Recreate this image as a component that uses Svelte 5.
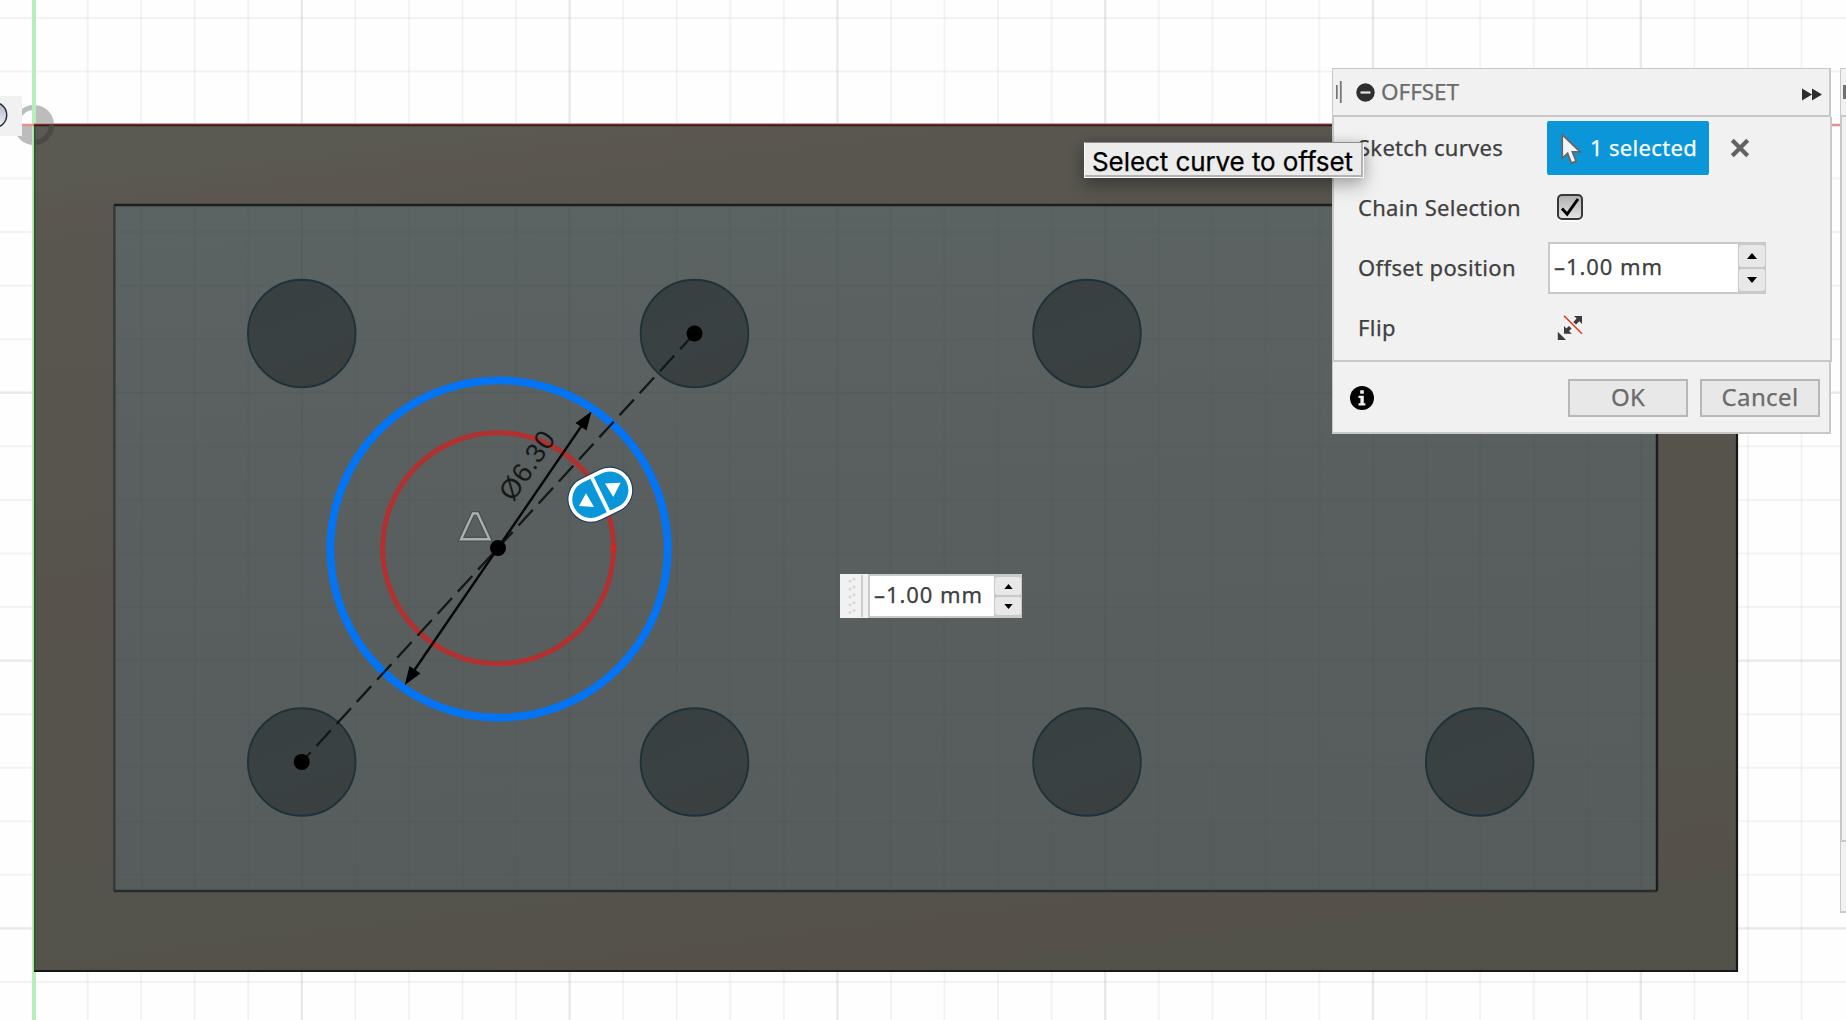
<script>
  const step = 53.56;
  const ox = 34;
  const oy = 125;
  const columns = Array.from({ length: 34 }, (_, i) => ({ at: ox + i * step, major: i % 5 === 0 }));
  const rows = Array.from({ length: 19 }, (_, i) => ({ at: oy + (i - 2) * step, major: (i - 2) % 5 === 0 }));
  const holes = [
    [301.7, 333.5], [694.5, 333.5], [1087, 333.5],
    [301.7, 762], [694.5, 762], [1087, 762], [1479.7, 762]
  ];

  let offset = $state('–1.00 mm');

  // Tracks a label's letters so that it takes up the given width.
  function fit(node, width) {
    const natural = node.getBoundingClientRect().width;
    const gaps = node.textContent.length;
    node.style.letterSpacing = `${(width - natural) / gaps}px`;
  }
</script>

<main class="viewport">
  <svg class="scene" width="1846" height="1020" viewBox="0 0 1846 1020">
    <defs>
      <linearGradient id="frame" gradientUnits="userSpaceOnUse" x1="0" y1="0" x2="131" y2="1092">
        <stop offset="0" stop-color="#5a5952" />
        <stop offset=".17" stop-color="#5a5952" />
        <stop offset=".2" stop-color="#5b5750" />
        <stop offset=".24" stop-color="#58564f" />
        <stop offset=".45" stop-color="#57554e" />
        <stop offset=".55" stop-color="#57534c" />
        <stop offset=".7" stop-color="#55534c" />
        <stop offset=".87" stop-color="#54534c" />
        <stop offset=".89" stop-color="#55514b" />
        <stop offset=".97" stop-color="#55514a" />
        <stop offset=".98" stop-color="#52514a" />
        <stop offset="1" stop-color="#52514a" />
      </linearGradient>
      <linearGradient id="pocket" x1="0" y1="0" x2=".1" y2="1">
        <stop offset="0" stop-color="#5c6363" />
        <stop offset=".5" stop-color="#595f5e" />
        <stop offset="1" stop-color="#575d5c" />
      </linearGradient>
      <linearGradient id="hole" x1="0" y1="0" x2=".4" y2="1">
        <stop offset="0" stop-color="#383f41" />
        <stop offset=".6" stop-color="#3a4143" />
        <stop offset="1" stop-color="#3a4040" />
      </linearGradient>
      <linearGradient id="ball" x1="0" y1="0" x2="0" y2="1">
        <stop offset="0" stop-color="#aeb4c4" />
        <stop offset="1" stop-color="#f4f5f8" />
      </linearGradient>
      <clipPath id="pocketArea"><rect x="115" y="206" width="1541" height="684" /></clipPath>
    </defs>

    <rect width="1846" height="1020" fill="#fefefe" />
    {#each columns as line}
      <line x1={line.at} x2={line.at} y1="0" y2="1020" class="grid" class:major={line.major} />
    {/each}
    {#each rows as line}
      <line x1="0" x2="1846" y1={line.at} y2={line.at} class="grid" class:major={line.major} />
    {/each}

    <!-- Axes and origin marker -->
    <path d="M34 125V105A20 20 0 0 1 54 125ZM34 125V145A20 20 0 0 1 14 125Z" fill="#bcbcbc" />
    <path d="M16.5 125A17.5 17.5 0 0 1 34 107.5" fill="none" stroke="#bcbcbc" stroke-width="5" />
    <line x1="34" x2="34" y1="0" y2="1020" stroke="#b6f0b6" stroke-width="4" />
    <line x1="0" x2="1846" y1="125" y2="125" stroke="#e88f8f" stroke-width="2.6" />

    <!-- Solid body -->
    <rect x="34.5" y="125" width="1702.5" height="846" fill="url(#frame)" />
    <path d="M34.7 125V971" stroke="#35522f" stroke-width="1.6" />
    <path d="M34 971H1737V125" fill="none" stroke="#171715" stroke-width="2.2" />
    <path d="M34 123.8H1737" stroke="#b98b8b" stroke-width="1" />
    <path d="M34 125.2H1737" stroke="#431518" stroke-width="2" />
    <path d="M51.5 125A17.5 17.5 0 0 1 34 142.5" fill="none" stroke="#4a4944" stroke-width="5" />

    <rect x="114.5" y="205" width="1542.5" height="686" fill="url(#pocket)" />
    <g clip-path="url(#pocketArea)">
      {#each columns as line}
        <line x1={line.at} x2={line.at} y1="205" y2="891" class="inner" class:strong={line.major} />
      {/each}
      {#each rows as line}
        <line x1="114" x2="1657" y1={line.at} y2={line.at} class="inner" class:strong={line.major} />
      {/each}
    </g>
    <path d="M114.3 205V891" stroke="#383b3a" stroke-width="2.6" />
    <path d="M114 891H1657" stroke="#272c2c" stroke-width="2.4" />
    <path d="M114 205H1657V891" fill="none" stroke="#1b1d1e" stroke-width="2.4" />

    {#each holes as [x, y]}
      <circle cx={x} cy={y} r="53.8" fill="url(#hole)" stroke="#1f323a" stroke-width="1.9" />
    {/each}

    <!-- Sketch -->
    <circle cx="498.1" cy="548.2" r="115.5" fill="none" stroke="#b13030" stroke-width="5" />
    <circle cx="613.5" cy="548.2" r="3" fill="#e0201f" />
    <circle cx="499" cy="549" r="168.7" fill="none" stroke="#0374f4" stroke-width="7.8" />
    <line x1="694.5" y1="333.5" x2="301.7" y2="762" stroke="#151717" stroke-width="2.3" stroke-dasharray="21.3 8.6" />
    <line x1="589" y1="415" x2="407" y2="681" stroke="#060707" stroke-width="2.4" />
    <path d="M591.5 411.5L586.5 430.5L575.5 423ZM404.8 685L409.5 666L420.5 673.5Z" fill="#000" />
    <circle cx="498" cy="548" r="8" />
    <circle cx="694.5" cy="333.5" r="8" />
    <circle cx="301.7" cy="762" r="8" />
    <path d="M473 513.5H477.5L489.5 539.3H461Z" fill="none" stroke="#4a5050" stroke-width="5" />
    <path d="M473 513.5H477.5L489.5 539.3H461Z" fill="none" stroke="#abafae" stroke-width="2.4" />
    <text class="dim" transform="translate(513 502.5) rotate(-55.6)" textLength="77">Ø6.30</text>

    <!-- Drag handle -->
    <g transform="translate(600.3 494.7)">
      <g transform="rotate(-26)">
        <rect x="-34" y="-23.5" width="68" height="47" rx="23.5" fill="#20395c" />
        <rect x="-31" y="-20.5" width="62" height="41" rx="20.5" fill="#0a96d9" stroke="#fff" stroke-width="3.8" />
        <path d="M0 -20V20" stroke="#fff" stroke-width="3.8" />
      </g>
      <path d="M-14.3 -1.5L-6.3 12.3L-21.3 11.3ZM4.7 -11.3L20.3 -12L13 2.3Z" fill="#fff" />
    </g>
  </svg>

  <div class="browser-edge">
    <svg width="22" height="40" viewBox="0 0 22 40"><circle cx="-6" cy="19" r="12.7" fill="url(#ball)" stroke="#222633" stroke-width="1.4" /></svg>
  </div>

  <section class="dialog">
    <header>
      <svg class="grip" width="6" height="22" viewBox="0 0 6 22"><path d="M.8 4V18M4.8 0V22" stroke="#777" stroke-width="1.8" /></svg>
      <svg width="19" height="19" viewBox="0 0 19 19"><circle cx="9.5" cy="9.5" r="9.2" fill="#2e2e2e" /><path d="M4.5 9.5H14.5" stroke="#e4e4e4" stroke-width="2.2" /></svg>
      <h1><span use:fit={78}>OFFSET</span></h1>
      <svg class="forward" width="20" height="13" viewBox="0 0 20 13"><path d="M0 .5L10 6.5L0 12.5ZM10 .5L20 6.5L10 12.5Z" fill="#2e2e2e" /></svg>
    </header>

    <div class="fields">
      <div class="field">
        <label for="curves"><span use:fit={145}>Sketch curves</span></label>
        <button id="curves" class="selection">
          <svg width="21" height="33" viewBox="0 0 21 33"><path d="M1.2 2.5V26.5L6.6 21.3L10.4 31.2L15.2 29.2L11.4 19.8H19.2Z" fill="#f2f4f8" stroke="#666" stroke-width="1.8" /></svg>
          <span use:fit={107}>1 selected</span>
        </button>
        <svg class="clear" width="20" height="20" viewBox="0 0 20 20"><path d="M2.3 2.3L17.7 17.7M17.7 2.3L2.3 17.7" stroke="#626262" stroke-width="4.2" /></svg>
      </div>
      <div class="field">
        <label for="chain"><span use:fit={163}>Chain Selection</span></label>
        <div id="chain" class="check">
          <svg width="22" height="22" viewBox="0 0 22 22"><path d="M3 12.5L8.2 18.2L19 3" fill="none" stroke="#000" stroke-width="2.9" /></svg>
        </div>
      </div>
      <div class="field">
        <label for="offset"><span use:fit={158}>Offset position</span></label>
        <div id="offset" class="spin large">
          <div class="value"><span use:fit={109}>{offset}</span></div>
          <div class="arrows">
            <i><svg width="10" height="6" viewBox="0 0 10 6"><path d="M0 6L5 0L10 6Z" /></svg></i>
            <i><svg width="10" height="6" viewBox="0 0 10 6"><path d="M0 0L5 6L10 0Z" /></svg></i>
          </div>
        </div>
      </div>
      <div class="field">
        <label for="flip"><span use:fit={38}>Flip</span></label>
        <svg id="flip" class="flip" width="26" height="26" viewBox="0 0 26 26">
          <path d="M17 1H25V9L22.3 6.3L19 9.6L16.3 6.9L19.6 3.6ZM7 11L9.4 13.4L12 10.9L14.6 13.4L12 16L14.8 18.8H7ZM.8 16.8L9 25H.8Z" fill="#3c3c3c" />
          <path d="M7 .8L25 18.8" stroke="#e63a22" stroke-width="1.6" />
        </svg>
      </div>
    </div>

    <footer>
      <svg width="24" height="24" viewBox="0 0 24 24"><circle cx="12" cy="12" r="12" fill="#030303" /><path d="M10.2 4.3H13.8V7.8H10.2ZM8.5 9.8H13.8V17.2H15.4V19.5H8.5V17.2H10.4V12H8.5Z" fill="#f0f0f0" /></svg>
      <button class="action ok"><span use:fit={34}>OK</span></button>
      <button class="action"><span use:fit={77}>Cancel</span></button>
    </footer>
  </section>

  <aside class="next-dialog">
    <div class="strip head"><i></i></div>
    <div class="strip middle"></div>
    <div class="strip foot"></div>
  </aside>

  <div class="mini">
    <svg width="8" height="40" viewBox="0 0 8 40"><path d="M2 4V38M6 2V40" stroke="#d6d6d6" stroke-width="2.6" stroke-dasharray="2.6 5.2" /></svg>
    <b></b>
    <div class="spin">
      <div class="value"><span use:fit={109}>{offset}</span></div>
      <div class="arrows">
        <i><svg width="9" height="5" viewBox="0 0 10 6"><path d="M0 6L5 0L10 6Z" /></svg></i>
        <i><svg width="9" height="5" viewBox="0 0 10 6"><path d="M0 0L5 6L10 0Z" /></svg></i>
      </div>
    </div>
  </div>

  <div class="tooltip"><span use:fit={261}>Select curve to offset</span></div>
</main>

<style>
  :global(body) { margin: 0; overflow: hidden; }
  * { box-sizing: border-box; }
  svg { display: block; flex: none; }
  .viewport {
    position: relative; width: 1846px; height: 1020px; overflow: hidden;
    font: 22px/30px "Noto Sans", "Open Sans", sans-serif; color: #404040;
    -webkit-text-stroke: .25px currentColor;
  }
  span { display: inline-block; white-space: pre; }
  .grid { stroke: #000; stroke-opacity: .045; stroke-width: 2; }
  .grid.major { stroke-opacity: .085; stroke-width: 2.4; }
  .inner { stroke: #45504f; stroke-opacity: .1; stroke-width: 2; }
  .inner.strong { stroke-opacity: .2; }
  .dim { font: 27.5px "Liberation Sans", sans-serif; fill: #161818; -webkit-text-stroke: .4px #161818; }

  .browser-edge { position: absolute; left: 0; top: 96px; width: 22px; height: 40px; background: #f1f1f1; }

  .dialog { position: absolute; left: 1332px; top: 68px; width: 500px; }
  header {
    display: flex; align-items: center; width: 499px; height: 49px; padding: 0 7px 0 3px;
    background: #f1f1f1; border: 1px solid #c8c8c8; border-right-width: 2px; border-bottom-width: 2px;
  }
  header .grip { margin-right: 14px; }
  h1 { margin: 0 auto 0 6px; font-size: 22.5px; font-weight: 400; color: #6c6c6c; line-height: 30px; padding-bottom: 1px; }
  .forward { margin-top: 4px; }
  .fields {
    display: grid; grid-auto-rows: 60px; height: 245px; padding: 1px 0 0 24px;
    background: #f1f1f1; border: solid #c8c8c8; border-width: 0 2px 2px;
  }
  .field { display: grid; grid-template-columns: 189px 221px 1fr; align-items: center; }
  .field label { padding-bottom: 3px; }
  button { font: inherit; margin: 0; }
  .selection {
    grid-column: 2; display: flex; align-items: center; gap: 8px; width: 162px; height: 54px; padding: 0 0 0 14px;
    background: #0a96d9; color: #fff; border: 0; border-radius: 2px;
  }
  .selection span { padding-bottom: 2px; }
  .clear { justify-self: start; margin-left: -38px; }
  .check {
    display: grid; place-items: center; width: 26px; height: 26px; margin-left: 10px; margin-top: -2px;
    background: linear-gradient(#b0b0b0, #e4e4e4); border: 2px solid #383838; border-radius: 5px;
    box-shadow: 0 2px 0 #fff;
  }
  .spin { display: flex; width: 154px; height: 44px; background: #fff; border: 2px solid #c9c9c9; border-right-width: 1px; }
  .spin .value { flex: 1; padding: 3px 0 0 4px; }
  .spin.large { width: 218px; height: 52px; margin-left: 1px; }
  .spin.large .value { padding: 7px 0 0 4px; }
  .arrows { display: grid; grid-template-rows: 1fr 1fr; width: 27px; background: #c9c9c9; gap: 2px; padding: 1px 0 1px 1px; }
  .arrows i { display: grid; place-items: center; background: #e8e8e8; border-radius: 3px; }
  .flip { margin-left: 10px; }
  footer {
    display: flex; align-items: center; width: 499px; height: 72px; padding: 1px 9px 0 17px;
    background: #f1f1f1; border: solid #c8c8c8; border-width: 0 2px 2px 1px;
  }
  footer svg { margin-top: 1px; }
  .action {
    display: grid; place-items: center; width: 120px; height: 38px; padding: 0 0 1px; margin-left: 12px;
    background: #e8e8e8; border: 2px solid #b7b7b7; color: #6b6b6b; font-size: 24px;
  }
  .action.ok { margin-left: auto; }

  .next-dialog { position: absolute; left: 1840px; top: 68px; width: 6px; }
  .strip { background: #f1f1f1; border-left: 2px solid #c9c9c9; }
  .head { display: flex; align-items: center; height: 49px; padding-left: 2px; border: solid #c9c9c9; border-width: 1px 0 2px 1px; }
  .head i { width: 3px; height: 14px; background: #707070; }
  .middle { height: 725px; border-bottom: 2px solid #c9c9c9; }
  .foot { height: 71px; border-left-width: 1px; border-bottom: 2px solid #c9c9c9; }

  .mini { position: absolute; left: 840px; top: 574px; width: 182px; height: 44px; display: flex; align-items: center; padding-left: 8px; background: #f1f1f1; }
  .mini b { width: 2px; height: 42px; margin: 0 5px; background: #cbcbcb; }

  .tooltip {
    position: absolute; left: 1084px; top: 142px; width: 280px; height: 36px; padding-left: 7px;
    background: #ececec; border: 1px solid #fafafa; border-top-color: #8d8d8d;
    box-shadow: inset -2px -2px 0 #b3b3b3, 0 8px 18px rgba(0, 0, 0, .28), 0 0 12px rgba(0, 0, 0, .12);
    font: 26px/37px Inter, sans-serif; color: #000;
  }
</style>
